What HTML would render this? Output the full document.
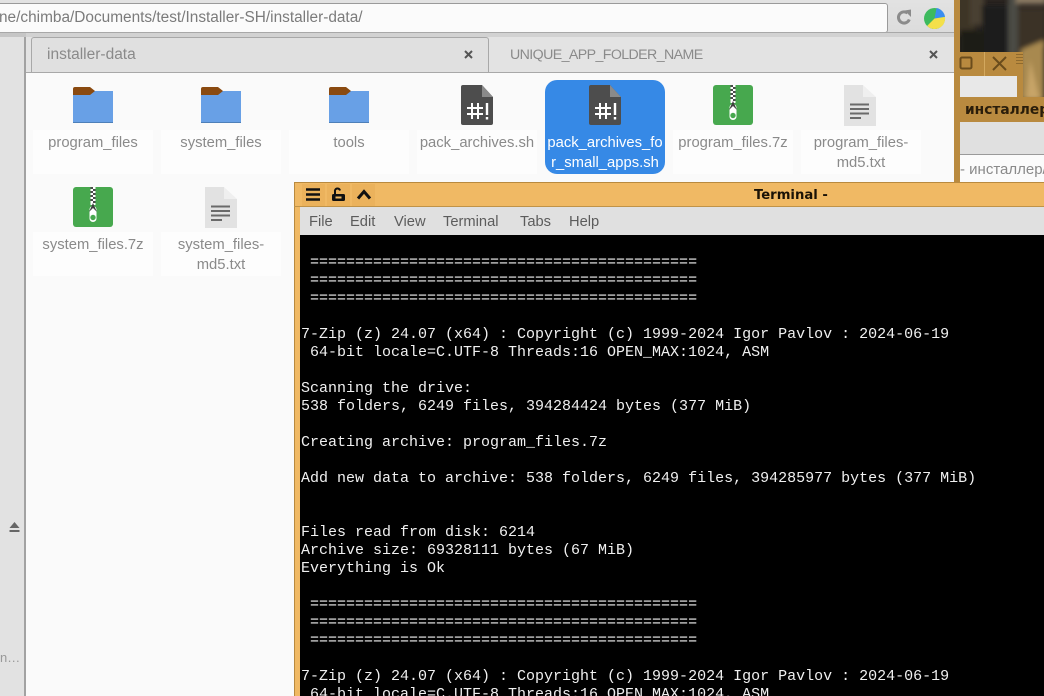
<!DOCTYPE html>
<html><head><meta charset="utf-8"><style>
html,body{margin:0;padding:0;width:1044px;height:696px;overflow:hidden;background:#fafafa}
body{position:relative;font-family:"Liberation Sans","Noto Sans CJK SC",sans-serif}
.a{position:absolute}
.lbl{position:absolute;width:120px;text-align:center;font-size:14.8px;line-height:20px;color:#8a8a8a;word-break:break-all}
.bx{position:absolute;background:#fdfdfd}
.t{position:absolute;white-space:pre;font:15px/18px "Liberation Mono",monospace;color:#f0f0f0;left:301px}
.m{position:absolute;top:212.500px;font-size:14.7px;line-height:18px;color:#5c5c5c}
svg{position:absolute;overflow:visible}
</style></head><body>
<!-- chrome -->
<div class="a" style="left:0;top:0;width:954px;height:72px;background:#dedede"></div>
<div class="a" style="left:0;top:0;width:954px;height:33px;background:linear-gradient(#e2e2e2,#dcdcdc)"></div>
<div class="a" style="left:-10px;top:3px;width:896px;height:28px;background:#fbfbfb;border:1px solid #9a9a9a;border-radius:3px"></div>
<div class="a" style="left:0;top:8px;width:880px;height:20px;overflow:hidden;font-size:15.4px;line-height:20px;color:#7b7b7b"><span style="position:absolute;left:-1px;white-space:nowrap">ne/chimba/Documents/test/Installer-SH/installer-data/</span></div>
<svg style="left:896px;top:9px" width="16" height="16" viewBox="0 0 16 16"><path d="M13.300 10.500A5.600 5.600 0 1 1 11.500 4" fill="none" stroke="#8b8b8b" stroke-width="3"/><path d="M8.500 1.500L15 .5V8z" fill="#8b8b8b"/></svg>
<svg style="left:924px;top:8px" width="21" height="21" viewBox="0 0 20 20"><circle cx="10" cy="10" r="10" fill="#3dba5e"/><path d="M10 10L12 0A10 10 0 0 1 20 8.500z" fill="#3b8ef0"/><path d="M3 17L10 10L20 8.500A10 10 0 0 1 3 17z" fill="#f4e04a"/></svg>
<!-- sidebar -->
<div class="a" style="left:0;top:33px;width:26px;height:4px;background:#c6c6c6"></div>
<div class="a" style="left:0;top:37px;width:24px;height:659px;background:#e2e2e2"></div>
<div class="a" style="left:24px;top:37px;width:2px;height:659px;background:#a2a2a2"></div>
<div class="a" style="left:0;top:32px;width:954px;height:1px;background:#a8a8a8"></div>
<svg style="left:9px;top:522px" width="11" height="11"><path d="M5.500 0L10.500 6H.5z" fill="#666"/><rect x=".5" y="8" width="10" height="2" fill="#666"/></svg>
<div class="a" style="left:0;top:650px;font-size:13px;line-height:16px;color:#999;letter-spacing:.5px">n...</div>
<!-- tabs -->
<div class="a" style="left:26px;top:33px;width:928px;height:39px;background:#e3e3e3"></div>
<div class="a" style="left:26px;top:33px;width:928px;height:4px;background:#d2d2d2"></div>
<div class="a" style="left:31px;top:37px;width:456px;height:34px;background:#e0e0e0;border:1px solid #a8a8a8;border-bottom:0;border-radius:3px 3px 0 0"></div>
<div class="a" style="left:26px;top:72px;width:928px;height:1px;background:#a8a8a8"></div>
<div class="a" style="left:47px;top:45px;font-size:15.500px;line-height:20px;color:#8a8a8a">installer-data</div>
<div class="a" style="left:510px;top:45px;font-size:14.200px;letter-spacing:-.6px;line-height:20px;color:#8a8a8a;white-space:nowrap">UNIQUE_APP_FOLDER_NAME</div>
<svg style="left:464px;top:50px" width="9" height="9"><path d="M1 1l7 7M8 1l-7 7" stroke="#555" stroke-width="2"/></svg>
<svg style="left:929px;top:50px" width="9" height="9"><path d="M1 1l7 7M8 1l-7 7" stroke="#555" stroke-width="2"/></svg>
<!-- content -->
<div class="a" style="left:26px;top:73px;width:928px;height:623px;background:#fafafa"></div>
<div class="bx" style="left:33px;top:130px;width:120px;height:44px"></div>
<div class="bx" style="left:161px;top:130px;width:120px;height:44px"></div>
<div class="bx" style="left:289px;top:130px;width:120px;height:44px"></div>
<div class="bx" style="left:417px;top:130px;width:120px;height:44px"></div>
<div class="bx" style="left:673px;top:130px;width:120px;height:44px"></div>
<div class="bx" style="left:801px;top:130px;width:120px;height:44px"></div>
<div class="bx" style="left:33px;top:232px;width:120px;height:44px"></div>
<div class="bx" style="left:161px;top:232px;width:120px;height:44px"></div>
<div class="a" style="left:545px;top:80px;width:120px;height:94px;background:#3689e6;border-radius:12px"></div>
<!-- folders -->
<svg style="left:73px;top:87px" width="40" height="36"><path d="M0 4H40V35Q40 36 39 36H1Q0 36 0 35z" fill="#68a0e6"/><path d="M0 2Q0 0 2 0H17L22 4L17 8H0z" fill="#8a4a10"/><rect y="35" width="40" height="1" fill="#4d7fb8"/></svg>
<svg style="left:201px;top:87px" width="40" height="36"><path d="M0 4H40V35Q40 36 39 36H1Q0 36 0 35z" fill="#68a0e6"/><path d="M0 2Q0 0 2 0H17L22 4L17 8H0z" fill="#8a4a10"/><rect y="35" width="40" height="1" fill="#4d7fb8"/></svg>
<svg style="left:329px;top:87px" width="40" height="36"><path d="M0 4H40V35Q40 36 39 36H1Q0 36 0 35z" fill="#68a0e6"/><path d="M0 2Q0 0 2 0H17L22 4L17 8H0z" fill="#8a4a10"/><rect y="35" width="40" height="1" fill="#4d7fb8"/></svg>
<!-- scripts -->
<svg style="left:461px;top:85px" width="32" height="40"><path d="M2 0H21L32 12V38Q32 40 30 40H2Q0 40 0 38V2Q0 0 2 0z" fill="#4d4d4d"/><path d="M21 0L32 12H21z" fill="#8a8a8a"/><path d="M11 18V34M17 18V34M6 23H22M6 29H22" stroke="#fff" stroke-width="2" fill="none"/><path d="M26 18V30M26 32V34.500" stroke="#fff" stroke-width="2.400"/></svg>
<svg style="left:589px;top:85px" width="32" height="40"><path d="M2 0H21L32 12V38Q32 40 30 40H2Q0 40 0 38V2Q0 0 2 0z" fill="#4d4d4d"/><path d="M21 0L32 12H21z" fill="#8a8a8a"/><path d="M11 18V34M17 18V34M6 23H22M6 29H22" stroke="#fff" stroke-width="2" fill="none"/><path d="M26 18V30M26 32V34.500" stroke="#fff" stroke-width="2.400"/></svg>
<!-- zips -->
<svg style="left:713px;top:85px" width="40" height="40"><rect width="40" height="40" rx="3" fill="#47a84e"/><path d="M17.500 0h5v18h-5z" fill="#fff"/><path d="M17.500 0h2.500v2h-2.500zM20 2h2.500v2h-2.500zM17.500 4h2.500v2h-2.500zM20 6h2.500v2h-2.500zM17.500 8h2.500v2h-2.500zM20 10h2.500v2h-2.500zM17.500 12h2.500v2h-2.500zM20 14h2.500v2h-2.500z" fill="#4a4a4a"/><rect x="16.500" y="19" width="7" height="16" rx="3.500" fill="#fff"/><path d="M20 16L24 25L20 21L16 25z" fill="#3f3f3f"/><circle cx="20" cy="30.500" r="2.700" fill="#47a84e"/></svg>
<svg style="left:73px;top:187px" width="40" height="40"><rect width="40" height="40" rx="3" fill="#47a84e"/><path d="M17.500 0h5v18h-5z" fill="#fff"/><path d="M17.500 0h2.500v2h-2.500zM20 2h2.500v2h-2.500zM17.500 4h2.500v2h-2.500zM20 6h2.500v2h-2.500zM17.500 8h2.500v2h-2.500zM20 10h2.500v2h-2.500zM17.500 12h2.500v2h-2.500zM20 14h2.500v2h-2.500z" fill="#4a4a4a"/><rect x="16.500" y="19" width="7" height="16" rx="3.500" fill="#fff"/><path d="M20 16L24 25L20 21L16 25z" fill="#3f3f3f"/><circle cx="20" cy="30.500" r="2.700" fill="#47a84e"/></svg>
<!-- txt -->
<svg style="left:844px;top:85px" width="32" height="41"><path d="M0 0H19V12H32V41H0z" fill="#e2e2e2"/><path d="M19 0L32 12H19z" fill="#efefef"/><path d="M6 19.500H25M6 24H25M6 28.500H25M6 33H17" stroke="#6a6a6a" stroke-width="2"/></svg>
<svg style="left:205px;top:187px" width="32" height="41"><path d="M0 0H19V12H32V41H0z" fill="#e2e2e2"/><path d="M19 0L32 12H19z" fill="#efefef"/><path d="M6 19.500H25M6 24H25M6 28.500H25M6 33H17" stroke="#6a6a6a" stroke-width="2"/></svg>
<!-- labels -->
<div class="lbl" style="left:33px;top:132.500px">program_files</div>
<div class="lbl" style="left:161px;top:132.500px">system_files</div>
<div class="lbl" style="left:289px;top:132.500px">tools</div>
<div class="lbl" style="left:417px;top:132.500px">pack_archives.sh</div>
<div class="lbl" style="left:545px;top:132.500px;color:#fff">pack_archives_fo<br>r_small_apps.sh</div>
<div class="lbl" style="left:673px;top:132.500px">program_files.7z</div>
<div class="lbl" style="left:801px;top:132.500px">program_files-<br>md5.txt</div>
<div class="lbl" style="left:33px;top:234.500px">system_files.7z</div>
<div class="lbl" style="left:161px;top:234.500px">system_files-<br>md5.txt</div>
<!-- background window right -->
<div class="a" style="left:954px;top:0;width:90px;height:182px;background:#b98a3f"></div>
<div class="a" style="left:960px;top:0;width:84px;height:97px;overflow:hidden;background:#2a2420">
<svg style="left:0;top:0" width="84" height="97" viewBox="0 0 84 97"><defs><filter id="b" x="-20%" y="-20%" width="140%" height="140%"><feGaussianBlur stdDeviation="2.500"/></filter></defs><g filter="url(#b)"><rect x="-5" y="-5" width="20" height="40" fill="#3d3428"/><rect x="10" y="-5" width="14" height="30" fill="#4a3f30"/><rect x="22" y="5" width="30" height="50" fill="#1c1c1e"/><rect x="0" y="30" width="24" height="25" fill="#1e1b18"/><rect x="48" y="-5" width="10" height="60" fill="#4c4c44"/><rect x="56" y="-5" width="30" height="9" fill="#8a7a64"/><rect x="58" y="8" width="28" height="40" fill="#3a3026"/><path d="M60 50L84 40V100H60z" fill="#a8894f"/><path d="M70 60L80 100H66z" fill="#c7a468"/></g></svg>
</div>
<div class="a" style="left:960px;top:52px;width:56px;height:24px;background:#b98a3f"></div>
<div class="a" style="left:984px;top:52px;width:1px;height:24px;background:#d3a85e"></div>
<div class="a" style="left:1016px;top:52px;width:7px;height:45px;background:#b98a3f"></div>
<svg style="left:1016px;top:54px" width="7" height="12"><path d="M0 .5H7M0 3.500H7M0 6.500H7M0 9.500H7" stroke="#8f6a2e"/></svg>
<div class="a" style="left:960px;top:76px;width:57px;height:21px;background:#e8e8e8"></div>
<svg style="left:960px;top:56px" width="48" height="15"><rect x=".5" y="1.500" width="11" height="11" rx="1.500" fill="none" stroke="#6a4c1c" stroke-width="2"/><path d="M33 1L46 14M46 1L33 14" stroke="#6a4c1c" stroke-width="2"/></svg>
<div class="a" style="left:960px;top:97px;width:84px;height:25px;background:#b98a3f"></div>
<div class="a" style="left:965px;top:100px;width:79px;overflow:hidden;font:bold 13.800px/20px 'DejaVu Sans',sans-serif;color:#2a1d0a;white-space:nowrap">инсталлер</div>
<div class="a" style="left:960px;top:122px;width:84px;height:32px;background:#e0e0e0"></div>
<div class="a" style="left:960px;top:154px;width:84px;height:28px;background:#fbfbfb;border-top:1px solid #9a9a9a;box-sizing:border-box"></div>
<div class="a" style="left:960px;top:161px;font-size:15px;line-height:18px;color:#8a8a8a;white-space:nowrap">- инсталлер/</div>
<!-- terminal -->
<div class="a" style="left:294px;top:182px;width:750px;height:514px;background:#f0b964"></div>
<div class="a" style="left:294px;top:182px;width:750px;height:1px;background:#b98a3f"></div>
<div class="a" style="left:294px;top:182px;width:1px;height:514px;background:#b98a3f"></div>
<div class="a" style="left:294px;top:206px;width:750px;height:1px;background:#c09348"></div>
<div class="a" style="left:300px;top:207px;width:744px;height:28px;background:#e0e0e0"></div>
<div class="a" style="left:300px;top:235px;width:744px;height:461px;background:#000"></div>
<div class="a" style="left:302px;top:184px;width:23px;height:22px;background:#ebb25c"></div>
<div class="a" style="left:327px;top:184px;width:23px;height:22px;background:#ebb25c"></div>
<div class="a" style="left:352px;top:184px;width:23px;height:22px;background:#ebb25c"></div>
<svg style="left:306px;top:188px" width="14" height="13"><path d="M0 1.500H14M0 6.500H14M0 11.500H14" stroke="#111" stroke-width="2.600"/></svg>
<svg style="left:332px;top:188px" width="13" height="14"><path d="M3 6V3.500A2.500 2.500 0 0 1 8 2.500" fill="none" stroke="#111" stroke-width="2"/><rect x="0" y="6" width="13" height="7" rx="1.500" fill="#111"/><rect x="3.500" y="8.500" width="6" height="2" fill="#f0b964"/></svg>
<svg style="left:357px;top:189px" width="14" height="11"><path d="M1 9.500L7 2.500L13 9.500" fill="none" stroke="#111" stroke-width="3"/></svg>
<div class="a" style="left:754px;top:186.500px;font:bold 13.200px/18px 'DejaVu Sans',sans-serif;color:#1a1206;white-space:nowrap">Terminal -</div>
<div class="m" style="left:309px">File</div>
<div class="m" style="left:350px">Edit</div>
<div class="m" style="left:394px">View</div>
<div class="m" style="left:443px">Terminal</div>
<div class="m" style="left:520px">Tabs</div>
<div class="m" style="left:569px">Help</div>
<div class="t" style="top:254px"> ===========================================
 ===========================================
 ===========================================

7-Zip (z) 24.07 (x64) : Copyright (c) 1999-2024 Igor Pavlov : 2024-06-19
 64-bit locale=C.UTF-8 Threads:16 OPEN_MAX:1024, ASM

Scanning the drive:
538 folders, 6249 files, 394284424 bytes (377 MiB)

Creating archive: program_files.7z

Add new data to archive: 538 folders, 6249 files, 394285977 bytes (377 MiB)


Files read from disk: 6214
Archive size: 69328111 bytes (67 MiB)
Everything is Ok

 ===========================================
 ===========================================
 ===========================================

7-Zip (z) 24.07 (x64) : Copyright (c) 1999-2024 Igor Pavlov : 2024-06-19
 64-bit locale=C.UTF-8 Threads:16 OPEN_MAX:1024, ASM</div>
</body></html>
